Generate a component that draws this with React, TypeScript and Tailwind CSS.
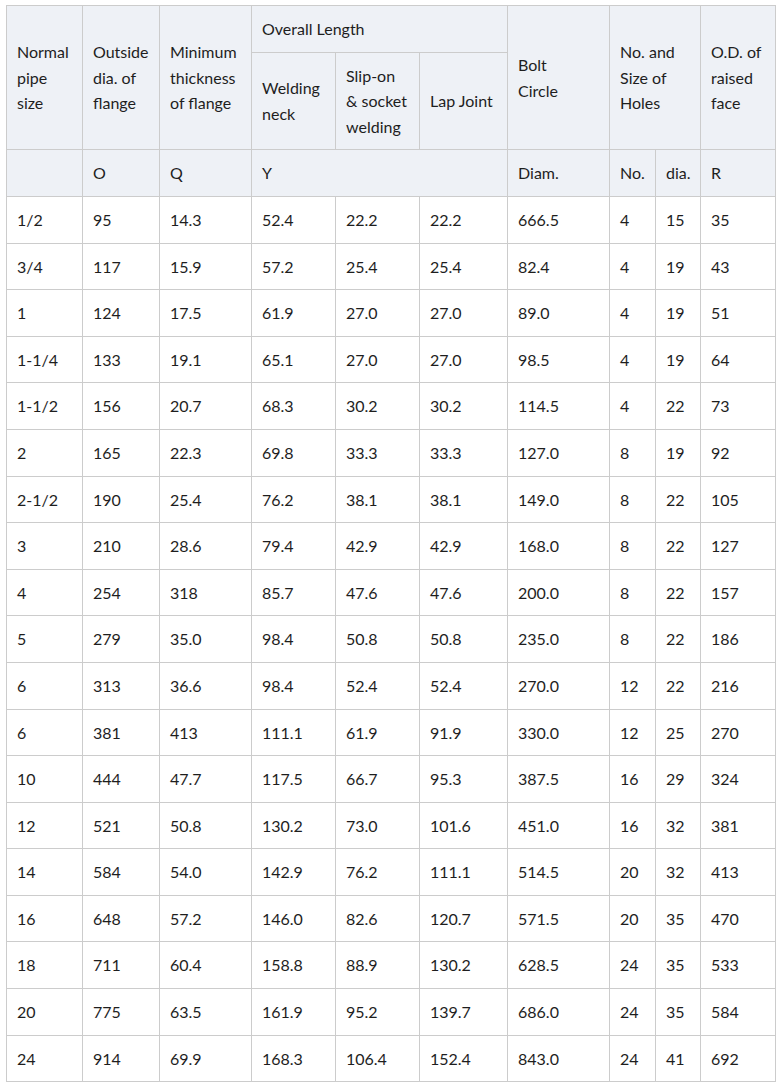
const ROWS: string[][] = [
  ["1/2", "95", "14.3", "52.4", "22.2", "22.2", "666.5", "4", "15", "35"],
  ["3/4", "117", "15.9", "57.2", "25.4", "25.4", "82.4", "4", "19", "43"],
  ["1", "124", "17.5", "61.9", "27.0", "27.0", "89.0", "4", "19", "51"],
  ["1-1/4", "133", "19.1", "65.1", "27.0", "27.0", "98.5", "4", "19", "64"],
  ["1-1/2", "156", "20.7", "68.3", "30.2", "30.2", "114.5", "4", "22", "73"],
  ["2", "165", "22.3", "69.8", "33.3", "33.3", "127.0", "8", "19", "92"],
  ["2-1/2", "190", "25.4", "76.2", "38.1", "38.1", "149.0", "8", "22", "105"],
  ["3", "210", "28.6", "79.4", "42.9", "42.9", "168.0", "8", "22", "127"],
  ["4", "254", "318", "85.7", "47.6", "47.6", "200.0", "8", "22", "157"],
  ["5", "279", "35.0", "98.4", "50.8", "50.8", "235.0", "8", "22", "186"],
  ["6", "313", "36.6", "98.4", "52.4", "52.4", "270.0", "12", "22", "216"],
  ["6", "381", "413", "111.1", "61.9", "91.9", "330.0", "12", "25", "270"],
  ["10", "444", "47.7", "117.5", "66.7", "95.3", "387.5", "16", "29", "324"],
  ["12", "521", "50.8", "130.2", "73.0", "101.6", "451.0", "16", "32", "381"],
  ["14", "584", "54.0", "142.9", "76.2", "111.1", "514.5", "20", "32", "413"],
  ["16", "648", "57.2", "146.0", "82.6", "120.7", "571.5", "20", "35", "470"],
  ["18", "711", "60.4", "158.8", "88.9", "130.2", "628.5", "24", "35", "533"],
  ["20", "775", "63.5", "161.9", "95.2", "139.7", "686.0", "24", "35", "584"],
  ["24", "914", "69.9", "168.3", "106.4", "152.4", "843.0", "24", "41", "692"],
];

const WIDTHS = [76, 77, 92, 84, 84, 88, 102, 46, 45, 75];

const cell = "border border-[#cccccc] px-[10px] py-[10px] align-middle text-left font-normal";
const head = `${cell} bg-[#eef1f6]`;

export default function App() {
  return (
    <div className="min-h-screen bg-white pl-[6px] pt-[5px] text-[16px] leading-[25.6px] text-[#1e1e1e] [font-family:Lato,'Noto_Sans',sans-serif]">
      <table className="table-fixed border-collapse w-[769px]">
        <colgroup>
          {WIDTHS.map((w, i) => (
            <col key={i} style={{ width: w }} />
          ))}
        </colgroup>
        <thead>
          <tr>
            <th rowSpan={2} className={head}>Normal pipe size</th>
            <th rowSpan={2} className={head}>Outside dia. of flange</th>
            <th rowSpan={2} className={head}>Minimum thickness of flange</th>
            <th colSpan={3} className={head}>Overall Length</th>
            <th rowSpan={2} className={head}>Bolt<br />Circle</th>
            <th rowSpan={2} colSpan={2} className={head}>No. and Size of Holes</th>
            <th rowSpan={2} className={head}>O.D. of raised face</th>
          </tr>
          <tr>
            <th className={head}>Welding neck</th>
            <th className={head}>Slip-on &amp; socket welding</th>
            <th className={head}>Lap Joint</th>
          </tr>
          <tr>
            <th className={head}></th>
            <th className={head}>O</th>
            <th className={head}>Q</th>
            <th colSpan={3} className={head}>Y</th>
            <th className={head}>Diam.</th>
            <th className={head}>No.</th>
            <th className={head}>dia.</th>
            <th className={head}>R</th>
          </tr>
        </thead>
        <tbody>
          {ROWS.map((r, i) => (
            <tr key={i}>
              {r.map((v, j) => (
                <td key={j} className={cell}>{v}</td>
              ))}
            </tr>
          ))}
        </tbody>
      </table>
    </div>
  );
}
